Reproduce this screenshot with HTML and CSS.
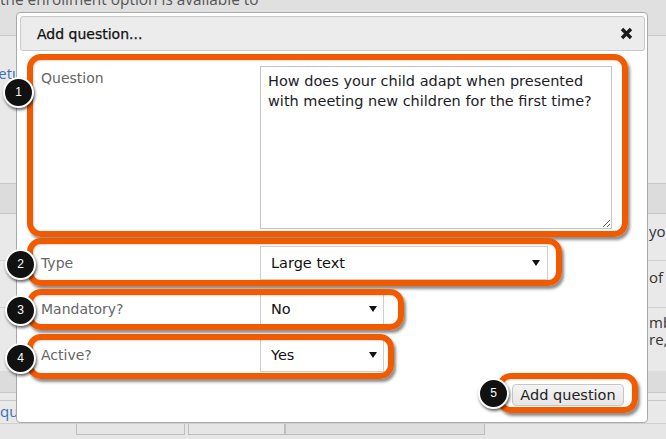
FILE: index.html
```html
<!DOCTYPE html>
<html lang="en">
<head>
<meta charset="utf-8">
<title>Add question</title>
<link rel="stylesheet" href="styles.css">
</head>
<body>
<div class="page">
  <div class="bg-top"><p class="intro">the enrollment option is available to</p></div>
  <div class="bg-sec"><a class="bg-link">Setup</a></div>
  <div class="bg-band"></div>
  <div class="bg-row r1"><span></span><span class="bg-txt">your child</span></div>
  <div class="bg-row r2"><span></span><span class="bg-txt">of your</span></div>
  <div class="bg-row r3"><span></span><span class="bg-txt">mber<br>re, and</span></div>
  <div class="bg-band2"></div>
  <div class="bg-row r4"><a class="bg-link2">questions</a><span></span></div>
  <div class="bg-tabs"><span class="tab t1"></span><span class="tab t2"></span><span class="tab t3"></span></div>

  <div class="dialog">
    <div class="titlebar">
      <span class="title">Add question...</span>
      <svg class="close" width="13" height="13" viewBox="0 0 13 13"><path d="M2 2 L11 11 M11 2 L2 11" stroke="#1a1a1a" stroke-width="3.4" stroke-linecap="butt"/></svg>
    </div>
    <div class="form">
      <div class="row row-q">
        <span class="label lbl-top">Question</span>
        <textarea class="ta" readonly>How does your child adapt when presented with meeting new children for the first time?</textarea>
        <div class="annot a1"><span class="badge b1">1</span></div>
      </div>
      <div class="row row-type">
        <span class="label">Type</span>
        <div class="select sel-wide"><span>Large text</span><svg class="arrow" width="8" height="6" viewBox="0 0 8 6"><path d="M0 0 H8 L4 6 Z" fill="#111"/></svg></div>
        <div class="annot a2"><span class="badge b2">2</span></div>
      </div>
      <div class="row row-man">
        <span class="label">Mandatory?</span>
        <div class="select sel-narrow"><span>No</span><svg class="arrow" width="8" height="6" viewBox="0 0 8 6"><path d="M0 0 H8 L4 6 Z" fill="#111"/></svg></div>
        <div class="annot a3"><span class="badge b3">3</span></div>
      </div>
      <div class="row row-act">
        <span class="label">Active?</span>
        <div class="select sel-narrow"><span>Yes</span><svg class="arrow" width="8" height="6" viewBox="0 0 8 6"><path d="M0 0 H8 L4 6 Z" fill="#111"/></svg></div>
        <div class="annot a4"><span class="badge b4">4</span></div>
      </div>
      <div class="actions">
        <div class="btn-wrap">
          <button class="btn" type="button">Add question</button>
          <div class="annot a5"><span class="badge b5">5</span></div>
        </div>
      </div>
    </div>
  </div>
</div>
</body>
</html>
```
FILE: styles.css
```css
* { box-sizing: border-box; }
html, body { margin: 0; padding: 0; }
body { width: 666px; height: 439px; overflow: hidden; }

.page {
  position: relative;
  width: 666px;
  height: 439px;
  overflow: hidden;
  background: #e6e6e6;
  font-family: "Open Sans", "DejaVu Sans", sans-serif;
  color: #555;
}

/* background page */
.bg-top {
  height: 36px;
  border-bottom: 1px solid #c8c8c8;
  background: #e0e0e0;
}
.intro {
  margin: 0;
  font-size: 15.4px;
  line-height: 20px;
  position: relative;
  top: -10px;
  color: #555;
  white-space: nowrap;
}
.bg-sec {
  height: 147px;
  padding-top: 27px;
  background: #e9e9e9;
}
.bg-link {
  display: block;
  margin-left: -10px;
  font-size: 15px;
  line-height: 20px;
  color: #3c6fb6;
}
.bg-band {
  height: 31px;
  background: #dcdcdc;
  border-top: 1px solid #c8c8c8;
  border-bottom: 1px solid #c8c8c8;
}
.bg-row {
  display: grid;
  grid-template-columns: 649px 1fr;
  border-bottom: 1px solid #d0d0d0;
  background: #e9e9e9;
  font-size: 15px;
  line-height: 17px;
  color: #333;
  overflow: hidden;
}
.bg-row.r1 { height: 47px; padding-top: 9px; }
.bg-row.r2 { height: 47px; padding-top: 8px; }
.bg-row.r3 { height: 63px; padding-top: 6px; border-bottom: none; }
.bg-row.r4 { height: 22px; padding-top: 2px; border-bottom: none; }
.bg-txt { white-space: nowrap; }
.bg-band2 {
  height: 30px;
  background: #dcdcdc;
  border-bottom: 1px solid #c8c8c8;
  box-shadow: inset 0 -7px 0 #e9e9e9, inset 0 -8px 0 #c8c8c8;
}
.bg-link2 { color: #3c6fb6; white-space: nowrap; }
.bg-tabs {
  display: flex;
  height: 17px;
  padding-left: 76px;
  border-top: 1px solid #d0d0d0;
}
.tab {
  height: 11px;
  border: 1px solid #bdbdbd;
  border-top: none;
  background: #e6e6e6;
}
.t1 { width: 109px; margin-right: 3px; }
.t2 { width: 97px; }
.t3 { width: 200px; background: #dedede; }

/* dialog */
.dialog {
  position: absolute;
  left: 16px;
  top: 12px;
  width: 632px;
  height: 411px;
  background: #fff;
  border: 1px solid #a9a9a9;
  border-radius: 4px;
  font-family: "DejaVu Sans", Verdana, sans-serif;
}
.titlebar {
  margin: 3px 2px 0 3px;
  height: 35px;
  background: #ececec;
  border: 1px solid #c9c9c9;
  border-radius: 3px;
  display: flex;
  align-items: center;
  justify-content: space-between;
  padding: 0 11px 0 16px;
}
.title {
  font-size: 14px;
  font-weight: normal;
  color: #111;
  -webkit-text-stroke: 0.25px #111;
}
.close { display: block; }

.form {
  padding: 15px 23px 0 24px;
  display: flex;
  flex-direction: column;
}
.row {
  position: relative;
  display: grid;
  grid-template-columns: 219px auto;
  justify-content: start;
  align-items: center;
}
.row-q { align-items: start; }
.row-type { margin-top: 17px; }
.row-man, .row-act { margin-top: 12px; }
.label {
  font-size: 14px;
  line-height: 17px;
  color: #666;
}
.lbl-top { padding-top: 4px; }
.ta {
  display: block;
  width: 352px;
  height: 163px;
  margin: 0;
  padding: 4px 7px;
  border: 1px solid #c4c4c4;
  font-family: "DejaVu Sans", Verdana, sans-serif;
  font-size: 14.5px;
  line-height: 20px;
  color: #1c1c28;
  background: #fff;
  resize: both;
  outline: none;
}
.select {
  height: 34px;
  border: 1px solid #cfcfcf;
  background: #fff;
  display: flex;
  align-items: center;
  justify-content: space-between;
  padding: 0 7px 0 10px;
  font-size: 14.5px;
  color: #111;
}
.sel-wide { width: 288px; }
.sel-narrow { width: 124px; padding-right: 6px; }
.arrow { display: block; }

.actions {
  margin-top: 12px;
  display: flex;
  justify-content: flex-end;
}
.btn-wrap { position: relative; }
.btn {
  display: block;
  width: 112px;
  height: 22px;
  margin: 0;
  padding: 0;
  border: 1px solid #c6c6c6;
  border-radius: 4px;
  background: linear-gradient(#f4f4f4, #e6e6e6);
  font-family: "DejaVu Sans", Verdana, sans-serif;
  font-size: 14.5px;
  color: #222;
}

/* annotation overlays */
.annot {
  position: absolute;
  border: 6px solid #f25a00;
  border-radius: 14px;
  box-shadow: 2px 3px 3px rgba(0,0,0,0.45), inset 1px 1px 2px rgba(0,0,0,0.15);
  pointer-events: none;
}
.a1 { left: -14px; top: -12px; width: 601px; height: 183px; }
.a2 { left: -14px; top: -8px; width: 535px; height: 48px; }
.a3 { left: -14px; top: -3px; width: 377px; height: 41px; }
.a4 { left: -14px; top: -4px; width: 367px; height: 45px; }
.a5 { left: -15px; top: -11px; width: 141px; height: 40px; }

.badge {
  position: absolute;
  width: 31px;
  height: 31px;
  border-radius: 50%;
  background: #111;
  border: 2px solid #fff;
  box-shadow: 1px 2px 3px rgba(0,0,0,0.6);
  color: #fff;
  font-family: "Liberation Sans", Arial, sans-serif;
  font-size: 12px;
  line-height: 27px;
  text-align: center;
}
.b1 { left: -30px; top: 17px; }
.b2 { left: -28px; top: 5px; }
.b3 { left: -28px; top: 0px; }
.b4 { left: -28px; top: 3px; }
.b5 { left: -25px; top: -1px; }
```
